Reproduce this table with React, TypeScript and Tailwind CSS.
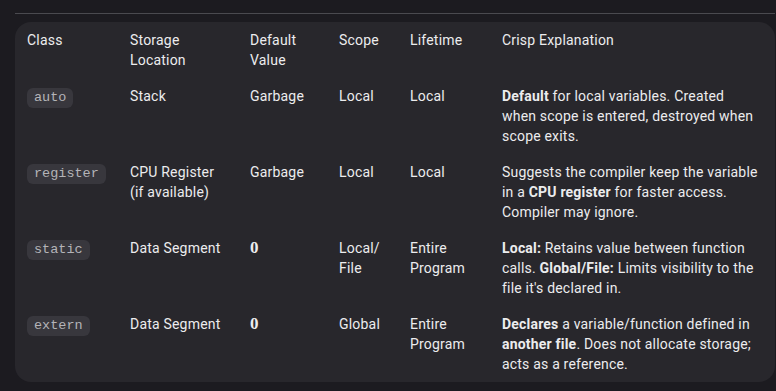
import React from 'react';

type Row = {
  cls: string;
  storage: React.ReactNode;
  def: React.ReactNode;
  scope: React.ReactNode;
  life: React.ReactNode;
  expl: React.ReactNode;
};

const Zero = () => (
  <span className="font-['Liberation_Serif',serif] font-bold text-[17px] leading-5 tracking-normal">0</span>
);

const rows: Row[] = [
  {
    cls: 'auto',
    storage: 'Stack',
    def: 'Garbage',
    scope: 'Local',
    life: 'Local',
    expl: (
      <>
        <b className="font-bold">Default</b> for local variables. Created when scope is entered, destroyed when scope exits.
      </>
    ),
  },
  {
    cls: 'register',
    storage: (
      <>
        CPU Register
        <br />
        (if available)
      </>
    ),
    def: 'Garbage',
    scope: 'Local',
    life: 'Local',
    expl: (
      <>
        Suggests the compiler keep the variable in a <b className="font-bold">CPU register</b> for faster access. Compiler may ignore.
      </>
    ),
  },
  {
    cls: 'static',
    storage: 'Data Segment',
    def: <Zero />,
    scope: (
      <>
        Local/
        <br />
        File
      </>
    ),
    life: (
      <>
        Entire
        <br />
        Program
      </>
    ),
    expl: (
      <>
        <b className="font-bold">Local:</b> Retains value between function calls. <b className="font-bold">Global/File:</b> Limits visibility to the file it's declared in.
      </>
    ),
  },
  {
    cls: 'extern',
    storage: 'Data Segment',
    def: <Zero />,
    scope: 'Global',
    life: (
      <>
        Entire
        <br />
        Program
      </>
    ),
    expl: (
      <>
        <b className="font-bold">Declares</b> a variable/function defined in <b className="font-bold">another file</b>. Does not allocate storage; acts as a reference.
      </>
    ),
  },
];

const headers = [
  { label: 'Class', w: 'w-[103px]' },
  { label: 'Storage Location', w: 'w-[120px]' },
  { label: 'Default Value', w: 'w-[89px]' },
  { label: 'Scope', w: 'w-[71px]' },
  { label: 'Lifetime', w: 'w-[92px]' },
  { label: 'Crisp Explanation', w: '' },
];

export default function App() {
  return (
    <div className="w-[776px] h-[391px] overflow-hidden bg-[#1c1b20] pl-[15px] pr-px pt-[13px] font-['Roboto',sans-serif] text-[14px] leading-5 tracking-[0.2px] text-[#ececee]">
      <div className="h-px bg-[#4a4a4f]" />
      <div className="mt-2 rounded-2xl bg-[#28272c] pr-[2px]">
        <table className="w-full table-fixed border-collapse text-left">
          <thead>
            <tr>
              {headers.map((h) => (
                <th key={h.label} className={`${h.w} px-3 py-2 align-top font-normal`}>
                  {h.label === 'Storage Location' ? (
                    <>
                      Storage
                      <br />
                      Location
                    </>
                  ) : h.label === 'Default Value' ? (
                    <>
                      Default
                      <br />
                      Value
                    </>
                  ) : (
                    h.label
                  )}
                </th>
              ))}
            </tr>
          </thead>
          <tbody>
            {rows.map((r) => (
              <tr key={r.cls}>
                <td className="px-3 py-2 align-top">
                  <code className="inline-block rounded-md bg-[#38373d] px-[7px] font-['Liberation_Mono',monospace] text-[13.5px] leading-5 tracking-normal text-[#b4b4b8]">
                    {r.cls}
                  </code>
                </td>
                <td className="px-3 py-2 align-top">{r.storage}</td>
                <td className="px-3 py-2 align-top">{r.def}</td>
                <td className="px-3 py-2 align-top">{r.scope}</td>
                <td className="px-3 py-2 align-top">{r.life}</td>
                <td className="px-3 py-2 align-top">{r.expl}</td>
              </tr>
            ))}
          </tbody>
        </table>
      </div>
    </div>
  );
}
